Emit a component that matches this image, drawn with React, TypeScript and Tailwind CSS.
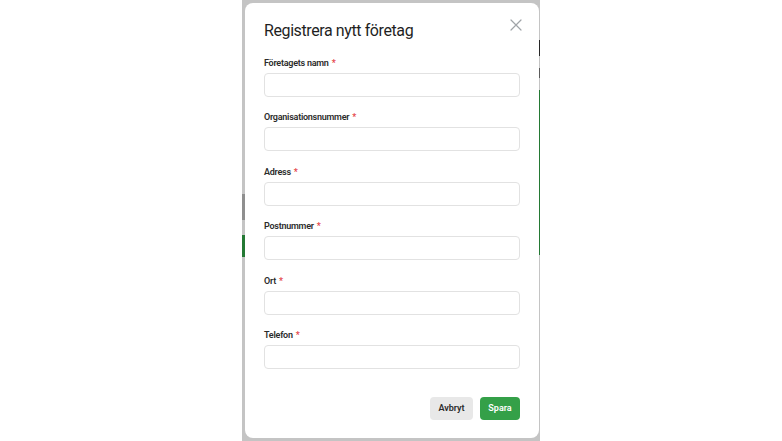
const fields = ["Företagets namn", "Organisationsnummer", "Adress", "Postnummer", "Ort", "Telefon"];

function Field({ label }: { label: string }) {
  return (
    <div className="flex flex-col gap-[3px]">
      <label className="text-[9px] leading-[14px] font-semibold tracking-[-0.25px] text-[#2b2b2b]">
        {label} <span className="ml-[1px] text-[#e5484d]">*</span>
      </label>
      <input
        type="text"
        className="h-[24px] w-full rounded-[4px] border border-[#e2e2e2] bg-white px-2 text-[11px] outline-none"
      />
    </div>
  );
}

export default function App() {
  return (
    <div className="min-h-[441px] w-full bg-white flex justify-center" style={{ fontFamily: "Roboto, 'Noto Sans', sans-serif" }}>
      <div className="relative w-[298px] h-[441px] bg-white overflow-hidden">
        {/* page behind the dialog */}
        <div className="flex flex-col gap-3">
          <div className="h-[28px]" />
          <div className="ml-auto w-[6px] h-[16px] bg-[#333]" />
          <div className="ml-auto w-[6px] h-[10px] bg-[#777]" />
          <div className="flex justify-between">
            <div className="w-[6px] h-[26px] mt-[104px] bg-[#bbb]" />
            <div className="w-[6px] h-[165px] border-r-2 border-[#2f9e44]" />
          </div>
          <div className="w-[8px] h-[22px] -mt-[32px] bg-[#2f9e44]" />
        </div>

        {/* overlay */}
        <div className="absolute inset-0 bg-black/[0.23] flex">
          <div className="mt-[3px] ml-[3px] w-[294px] h-[435px] rounded-[8px] bg-white px-[19px] pt-[16px] pb-[18px] flex flex-col">
            <div className="flex items-start justify-between">
              <h2 className="text-[16px] leading-[24px] tracking-[-0.4px] text-[#1f1f1f]">Registrera nytt företag</h2>
              <button className="mt-[0px] mr-[-2px] text-[#a0a4a8]">
                <svg width="12" height="12" viewBox="0 0 12 12" fill="none" stroke="currentColor" strokeWidth="1.2" strokeLinecap="round">
                  <path d="M1 1l10 10M11 1L1 11" />
                </svg>
              </button>
            </div>
            <div className="mt-[13px] flex flex-col gap-[13.4px]">
              {fields.map((f) => (
                <Field key={f} label={f} />
              ))}
            </div>
            <div className="mt-auto flex justify-end gap-[7px]">
              <button className="h-[23px] w-[43px] rounded-[4px] bg-[#e8e8e8] text-[9px] font-semibold text-[#2b2b2b]">Avbryt</button>
              <button className="h-[23px] w-[40px] rounded-[4px] bg-[#34a048] text-[9px] font-semibold text-white">Spara</button>
            </div>
          </div>
        </div>
      </div>
    </div>
  );
}
